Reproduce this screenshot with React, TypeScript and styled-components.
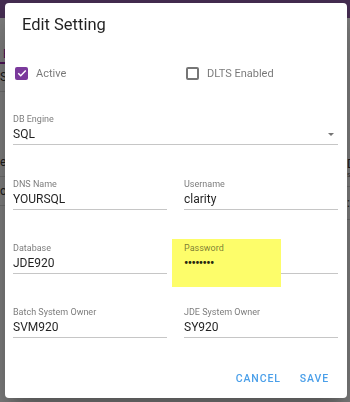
import React from "react";
import styled, { createGlobalStyle } from "styled-components";

const GlobalStyle = createGlobalStyle`
  html, body {
    margin: 0;
    padding: 0;
    width: 350px;
    height: 402px;
    overflow: hidden;
    font-family: Roboto, "Noto Sans", Arial, sans-serif;
  }
`;

// page behind the dialog, only its edges show
const Page = styled.div`
  width: 350px;
  height: 402px;
  background: #fff;
  display: flex;
  flex-direction: column;
`;
const AppBar = styled.div`
  height: 18px;
  background: #8d5ba7;
  flex-shrink: 0;
`;
const PageBody = styled.div`
  flex: 1;
  display: flex;
  justify-content: space-between;
`;
const Strip = styled.div<{ $w: number; $align: "left" | "right" }>`
  width: ${(p) => p.$w}px;
  overflow: hidden;
  display: flex;
  flex-direction: column;
  align-items: ${(p) => (p.$align === "right" ? "flex-end" : "flex-start")};
`;
const TabText = styled.div`
  margin-top: 26px;
  height: 20px;
  width: 100%;
  box-sizing: border-box;
  padding-left: 3px;
  font-size: 12px;
  line-height: 20px;
  color: #9c27b0;
  border-bottom: 2px solid #9c27b0;
`;
const PageRow = styled.div<{ $h: number; $mt?: number }>`
  height: ${(p) => p.$h}px;
  margin-top: ${(p) => p.$mt ?? 0}px;
  width: 100%;
  flex-shrink: 0;
  display: flex;
  flex-direction: column;
  justify-content: center;
  border-bottom: 1px solid #dcdcdc;
  font-size: 12px;
  line-height: 1.2;
  color: #333;
  white-space: nowrap;
`;
const SubText = styled.span`
  font-size: 7px;
  color: #666;
`;

const Overlay = styled.div`
  position: fixed;
  inset: 0;
  background: rgba(0, 0, 0, 0.5);
`;

const Dialog = styled.div`
  position: fixed;
  left: 5px;
  top: 3px;
  width: 342px;
  height: 395px;
  background: #fff;
  border-radius: 4px;
  box-shadow: 0 11px 15px -7px rgba(0, 0, 0, 0.2), 0 24px 38px 3px rgba(0, 0, 0, 0.14),
    0 9px 46px 8px rgba(0, 0, 0, 0.12);
  display: flex;
  flex-direction: column;
  box-sizing: border-box;
`;

const Title = styled.h2`
  margin: 0;
  padding: 11px 17px 0;
  font-size: 16.5px;
  line-height: 22px;
  font-weight: 400;
  color: rgba(0, 0, 0, 0.87);
`;

const Content = styled.div`
  padding: 0 9px 0 8px;
`;

const Grid = styled.div<{ $mt?: number }>`
  display: grid;
  grid-template-columns: 1fr 1fr;
  column-gap: 17px;
  row-gap: 33px;
  margin-top: ${(p) => p.$mt ?? 0}px;
`;

const CheckRow = styled(Grid)`
  height: 24px;
  align-items: center;
`;

const CheckLabel = styled.label`
  display: flex;
  align-items: center;
  gap: 8px;
  padding-left: 2px;
  font-size: 11px;
  color: rgba(0, 0, 0, 0.54);
`;

const Box = styled.span<{ $checked?: boolean }>`
  width: 13px;
  height: 13px;
  box-sizing: border-box;
  border-radius: 2px;
  display: flex;
  align-items: center;
  justify-content: center;
  background: ${(p) => (p.$checked ? "#7b3a9c" : "transparent")};
  border: ${(p) => (p.$checked ? "none" : "2px solid #767676")};
`;

const Field = styled.div<{ $full?: boolean }>`
  position: relative;
  grid-column: ${(p) => (p.$full ? "1 / -1" : "auto")};
  margin-bottom: ${(p) => (p.$full ? 1 : 0)}px;
  border-bottom: 1px solid #c6c6c6;
  padding-bottom: 2px;
`;

const Label = styled.div`
  position: relative;
  font-size: 9px;
  line-height: 11px;
  color: rgba(0, 0, 0, 0.54);
  margin-bottom: 2px;
`;

const Value = styled.div`
  position: relative;
  display: flex;
  justify-content: space-between;
  align-items: center;
  font-size: 12px;
  line-height: 15px;
  color: rgba(0, 0, 0, 0.87);
`;

const Dots = styled.span`
  font-size: 12px;
  letter-spacing: -0.6px;
  font-weight: 700;
`;

const Arrow = styled.span`
  width: 0;
  height: 0;
  margin-right: 4px;
  border-left: 3.5px solid transparent;
  border-right: 3.5px solid transparent;
  border-top: 3.5px solid #757575;
`;

const Highlight = styled.div`
  position: absolute;
  left: -12px;
  top: -4px;
  width: 109px;
  height: 48px;
  background: #fdfd6a;
`;

const Actions = styled.div`
  margin-top: auto;
  display: flex;
  justify-content: flex-end;
  gap: 3px;
  padding: 0 10px 6px 0;
`;

const Button = styled.button`
  border: none;
  background: none;
  padding: 6px 8px;
  font-family: inherit;
  font-size: 10.5px;
  line-height: 14px;
  font-weight: 500;
  letter-spacing: 0.9px;
  color: #4a9fe9;
  text-transform: uppercase;
`;

const Check = () => (
  <svg width="10" height="10" viewBox="0 0 24 24">
    <path d="M3 12.5l6 6L21 6" fill="none" stroke="#fff" strokeWidth="3.5" />
  </svg>
);

export default function App() {
  return (
    <>
      <GlobalStyle />
      <Page>
        <AppBar />
        <PageBody>
          <Strip $w={5} $align="right">
            <TabText>E</TabText>
            <PageRow $h={27}>S</PageRow>
            <PageRow $h={28} $mt={56}>e</PageRow>
            <PageRow $h={28}>ol</PageRow>
          </Strip>
          <Strip $w={3} $align="left">
            <PageRow $h={36} $mt={132}>
              <span>D</span>
              <SubText>s</SubText>
            </PageRow>
            <PageRow $h={32}>:</PageRow>
          </Strip>
        </PageBody>
      </Page>
      <Overlay />
      <Dialog>
        <Title>Edit Setting</Title>
        <Content>
          <CheckRow $mt={25}>
            <CheckLabel>
              <Box $checked>
                <Check />
              </Box>
              Active
            </CheckLabel>
            <CheckLabel>
              <Box />
              DLTS Enabled
            </CheckLabel>
          </CheckRow>
          <Grid $mt={29}>
            <Field $full>
              <Label>DB Engine</Label>
              <Value>
                SQL
                <Arrow />
              </Value>
            </Field>
            <Field>
              <Label>DNS Name</Label>
              <Value>YOURSQL</Value>
            </Field>
            <Field>
              <Label>Username</Label>
              <Value>clarity</Value>
            </Field>
            <Field>
              <Label>Database</Label>
              <Value>JDE920</Value>
            </Field>
            <Field>
              <Highlight />
              <Label>Password</Label>
              <Value>
                <Dots>••••••••</Dots>
              </Value>
            </Field>
            <Field>
              <Label>Batch System Owner</Label>
              <Value>SVM920</Value>
            </Field>
            <Field>
              <Label>JDE System Owner</Label>
              <Value>SY920</Value>
            </Field>
          </Grid>
        </Content>
        <Actions>
          <Button>Cancel</Button>
          <Button>Save</Button>
        </Actions>
      </Dialog>
    </>
  );
}
